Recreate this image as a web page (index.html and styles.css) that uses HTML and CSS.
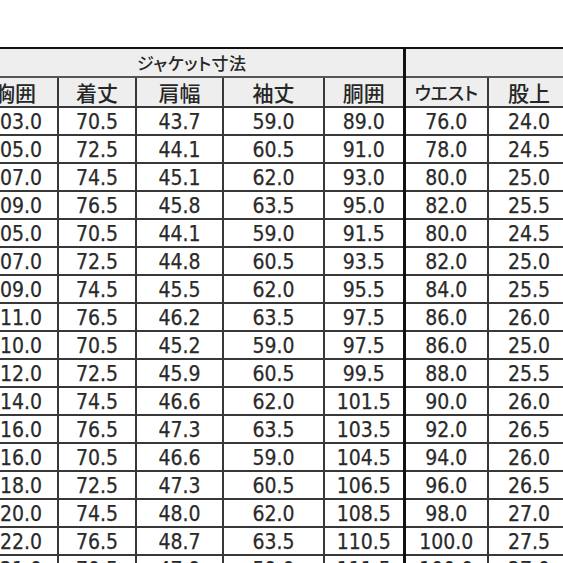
FILE: index.html
```html
<!DOCTYPE html>
<html lang="ja">
<head>
<meta charset="utf-8">
<link rel="stylesheet" href="styles.css">
</head>
<body>
<div class="sheet">
<table class="size-table">
  <colgroup>
    <col class="c1"><col class="c2"><col class="c3"><col class="c4"><col class="c5"><col class="c6"><col class="c7">
  </colgroup>
  <thead>
    <tr class="group-row">
      <th colspan="5" class="group jacket">ジャケット寸法</th>
      <th colspan="2" class="group pants"></th>
    </tr>
    <tr class="head-row">
      <th>胸囲</th><th>着丈</th><th>肩幅</th><th>袖丈</th><th class="sep">胴囲</th><th class="kana">ウエスト</th><th>股上</th>
    </tr>
  </thead>
  <tbody>
    <tr><td>103.0</td><td>70.5</td><td>43.7</td><td>59.0</td><td class="sep">89.0</td><td>76.0</td><td>24.0</td></tr>
    <tr><td>105.0</td><td>72.5</td><td>44.1</td><td>60.5</td><td class="sep">91.0</td><td>78.0</td><td>24.5</td></tr>
    <tr><td>107.0</td><td>74.5</td><td>45.1</td><td>62.0</td><td class="sep">93.0</td><td>80.0</td><td>25.0</td></tr>
    <tr><td>109.0</td><td>76.5</td><td>45.8</td><td>63.5</td><td class="sep">95.0</td><td>82.0</td><td>25.5</td></tr>
    <tr><td>105.0</td><td>70.5</td><td>44.1</td><td>59.0</td><td class="sep">91.5</td><td>80.0</td><td>24.5</td></tr>
    <tr><td>107.0</td><td>72.5</td><td>44.8</td><td>60.5</td><td class="sep">93.5</td><td>82.0</td><td>25.0</td></tr>
    <tr><td>109.0</td><td>74.5</td><td>45.5</td><td>62.0</td><td class="sep">95.5</td><td>84.0</td><td>25.5</td></tr>
    <tr><td>111.0</td><td>76.5</td><td>46.2</td><td>63.5</td><td class="sep">97.5</td><td>86.0</td><td>26.0</td></tr>
    <tr><td>110.0</td><td>70.5</td><td>45.2</td><td>59.0</td><td class="sep">97.5</td><td>86.0</td><td>25.0</td></tr>
    <tr><td>112.0</td><td>72.5</td><td>45.9</td><td>60.5</td><td class="sep">99.5</td><td>88.0</td><td>25.5</td></tr>
    <tr><td>114.0</td><td>74.5</td><td>46.6</td><td>62.0</td><td class="sep">101.5</td><td>90.0</td><td>26.0</td></tr>
    <tr><td>116.0</td><td>76.5</td><td>47.3</td><td>63.5</td><td class="sep">103.5</td><td>92.0</td><td>26.5</td></tr>
    <tr><td>116.0</td><td>70.5</td><td>46.6</td><td>59.0</td><td class="sep">104.5</td><td>94.0</td><td>26.0</td></tr>
    <tr><td>118.0</td><td>72.5</td><td>47.3</td><td>60.5</td><td class="sep">106.5</td><td>96.0</td><td>26.5</td></tr>
    <tr><td>120.0</td><td>74.5</td><td>48.0</td><td>62.0</td><td class="sep">108.5</td><td>98.0</td><td>27.0</td></tr>
    <tr><td>122.0</td><td>76.5</td><td>48.7</td><td>63.5</td><td class="sep">110.5</td><td>100.0</td><td>27.5</td></tr>
    <tr><td>121.0</td><td>70.5</td><td>47.9</td><td>59.0</td><td class="sep">111.5</td><td>100.0</td><td>27.0</td></tr>
  </tbody>
</table>
</div>
</body>
</html>
```
FILE: styles.css
```css
html, body {
  margin: 0;
  padding: 0;
  background: #ffffff;
  overflow: hidden;
  width: 563px;
  height: 563px;
}

.sheet {
  padding-top: 47px;
  margin-left: -29px;
  width: 640px;
}

.size-table {
  border-collapse: collapse;
  table-layout: fixed;
  width: 598px;
  font-family: "DejaVu Sans Condensed", "Noto Sans CJK JP", sans-serif;
  font-size: 21px;
  color: #2a2a2a;
}

.c1 { width: 86px; }
.c2 { width: 78px; }
.c3 { width: 87px; }
.c4 { width: 101px; }
.c5 { width: 80px; }
.c6 { width: 84px; }
.c7 { width: 82px; }

.size-table th,
.size-table td {
  border: 2px solid #383838;
  padding: 0;
  text-align: center;
  white-space: nowrap;
  overflow: hidden;
  line-height: 1;
}

.size-table thead th {
  background: #eeeeee;
  font-family: "Noto Sans CJK JP", sans-serif;
  font-weight: 500;
  font-size: 21px;
  color: #262626;
}

.group-row th {
  height: 27px;
  border-top: 2px solid #111111;
  border-bottom: 2px solid #555555;
}

.group.jacket {
  font-size: 17px;
  font-feature-settings: "palt";
  text-align: left;
  padding-left: 164px;
  letter-spacing: 0.5px;
}

.group.pants {
  border-left: 3px solid #111111;
}

.head-row th {
  height: 28px;
}

.head-row th.kana {
  font-size: 18px;
  font-feature-settings: "palt";
}

.size-table tbody td {
  height: 24px;
  background: #ffffff;
  padding-top: 2px;
  -webkit-text-stroke: 0.25px #2a2a2a;
}

.size-table .sep + td,
.size-table .sep + th {
  border-left: 3px solid #111111;
}
```
